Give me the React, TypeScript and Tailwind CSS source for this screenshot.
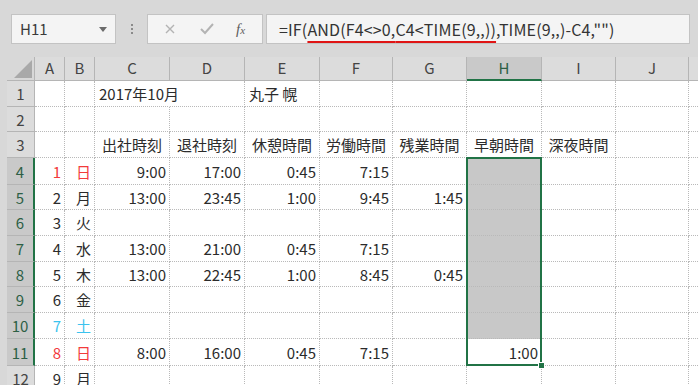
import React from 'react';

const FONT = { fontFamily: '"Noto Sans CJK JP", "Noto Sans", sans-serif' };

const COLS = ['A', 'B', 'C', 'D', 'E', 'F', 'G', 'H', 'I', 'J'];
const ROW_H = ['h-[26px]', 'h-[25px]', 'h-[26px]', 'h-[27px]', 'h-[25px]', 'h-[26px]', 'h-[26px]', 'h-[25px]', 'h-[26px]', 'h-[26px]', 'h-[27px]', 'h-[26px]'];

type Cell = { v: string; align?: 'l' | 'c' | 'r'; color?: string; spill?: boolean };
type Row = Record<string, Cell>;

const red = 'text-[#f23b3b]';
const blue = 'text-[#3cc3ee]';

const rows: Row[] = [
  { C: { v: '2017年10月', align: 'l', spill: true }, E: { v: '丸子 幌', align: 'l' } },
  {},
  {
    C: { v: '出社時刻', align: 'c' },
    D: { v: '退社時刻', align: 'c' },
    E: { v: '休憩時間', align: 'c' },
    F: { v: '労働時間', align: 'c' },
    G: { v: '残業時間', align: 'c' },
    H: { v: '早朝時間', align: 'c' },
    I: { v: '深夜時間', align: 'c' },
  },
  { A: { v: '1', color: red }, B: { v: '日', color: red }, C: { v: '9:00' }, D: { v: '17:00' }, E: { v: '0:45' }, F: { v: '7:15' } },
  { A: { v: '2' }, B: { v: '月' }, C: { v: '13:00' }, D: { v: '23:45' }, E: { v: '1:00' }, F: { v: '9:45' }, G: { v: '1:45' } },
  { A: { v: '3' }, B: { v: '火' } },
  { A: { v: '4' }, B: { v: '水' }, C: { v: '13:00' }, D: { v: '21:00' }, E: { v: '0:45' }, F: { v: '7:15' } },
  { A: { v: '5' }, B: { v: '木' }, C: { v: '13:00' }, D: { v: '22:45' }, E: { v: '1:00' }, F: { v: '8:45' }, G: { v: '0:45' } },
  { A: { v: '6' }, B: { v: '金' } },
  { A: { v: '7', color: blue }, B: { v: '土', color: blue } },
  { A: { v: '8', color: red }, B: { v: '日', color: red }, C: { v: '8:00' }, D: { v: '16:00' }, E: { v: '0:45' }, F: { v: '7:15' }, H: { v: '1:00' } },
  { A: { v: '9' }, B: { v: '月' } },
];

function Corner() {
  return (
    <div className="flex h-full items-end justify-end border-r border-b border-[#b5b5b5] pr-[2px] pb-[2px]">
      <svg width="18" height="18" viewBox="0 0 18 18">
        <polygon points="18,0 18,18 0,18" fill="#a9a9a9" />
      </svg>
    </div>
  );
}

function FormulaBar() {
  return (
    <div className="flex h-[57px] items-start gap-0 pt-[14px] pl-[11px]">
      <div className="flex h-[30px] w-[105px] items-center justify-between border border-[#c3c3c3] bg-[#f4f4f4] pl-[8px] pr-[8px] text-[15px] text-[#3a3a3a]">
        <span>H11</span>
        <svg width="8" height="5" viewBox="0 0 8 5">
          <polygon points="0,0 8,0 4,5" fill="#6b6b6b" />
        </svg>
      </div>
      <div className="flex h-[30px] w-[31px] flex-col items-center justify-center gap-[2px]">
        <span className="h-[2px] w-[2px] bg-[#8a8a8a]" />
        <span className="h-[2px] w-[2px] bg-[#8a8a8a]" />
        <span className="h-[2px] w-[2px] bg-[#8a8a8a]" />
      </div>
      <div className="flex h-[30px] w-[116px] items-center border border-[#c3c3c3] bg-[#f4f4f4] pl-[14px] text-[#b0b0b0]">
        <svg width="12" height="12" viewBox="0 0 12 12" className="ml-[2px]">
          <path d="M2 2 L10 10 M10 2 L2 10" stroke="#b3b3b3" strokeWidth="1.4" />
        </svg>
        <svg width="14" height="12" viewBox="0 0 14 12" className="ml-[24px]">
          <path d="M1 6 L5 10 L13 1" stroke="#b3b3b3" strokeWidth="2" fill="none" />
        </svg>
        <span className="ml-[22px] text-[15px] italic text-[#5d5d5d]" style={{ fontFamily: '"Liberation Serif", serif' }}>
          f<span className="text-[11px]">x</span>
        </span>
      </div>
      <div className="ml-[3px] flex h-[30px] w-[424px] items-center border border-[#c3c3c3] bg-[#f4f4f4] pl-[12px] text-[16px] tracking-[0.15px] text-[#333]">
        <span>=IF(</span>
        <span className="underline decoration-[#e01515] decoration-2 underline-offset-[5px]">AND(F4&lt;&gt;0,</span>
        <span className="underline decoration-[#e01515] decoration-2 underline-offset-[5px]">C4&lt;TIME(9,,))</span>
        <span>,TIME(9,,)-C4,"")</span>
      </div>
    </div>
  );
}

function Sheet() {
  return (
    <div className="grid grid-cols-[7px_28px_30px_30px_75px_75px_75px_73px_74px_75px_74px_73px_9px]">
      {/* column header row */}
      <div className="h-[24px]" />
      <Corner />
      {COLS.map((c) => (
        <div
          key={c}
          className={
            c === 'H'
              ? 'flex h-[24px] items-center justify-center border-r border-b-2 border-r-[#b5b5b5] border-b-[#217346] bg-[#c9c9c9] text-[15px] text-[#2d5f45]'
              : 'flex h-[24px] items-center justify-center border-r border-b border-[#b5b5b5] bg-[#dcdcdc] text-[15px] text-[#444]'
          }
        >
          {c}
        </div>
      ))}
      <div className="h-[24px] border-b border-[#b5b5b5] bg-[#dcdcdc]" />

      {rows.map((row, i) => {
        const n = i + 1;
        const sel = n >= 4 && n <= 11;
        const h = ROW_H[i];
        return (
          <React.Fragment key={n}>
            <div className={h} />
            <div
              className={
                sel
                  ? `${h} flex items-center justify-center border-r-2 border-b border-r-[#217346] border-b-[#b5b5b5] bg-[#c9c9c9] pt-[2px] text-[15px] text-[#2d5f45]`
                  : `${h} flex items-center justify-center border-r border-b border-[#b5b5b5] bg-[#dcdcdc] pt-[2px] text-[15px] text-[#444]`
              }
            >
              {n}
            </div>
            {COLS.map((c) => {
              const cell = row[c];
              const shaded = c === 'H' && n >= 4 && n <= 10;
              const align = cell?.align ?? 'r';
              return (
                <div
                  key={c}
                  className={[
                    h,
                    'relative flex items-center whitespace-nowrap border-r border-b border-dotted border-[#b9b9b9] pt-[2px] text-[15px]',
                    align === 'r' ? 'justify-end pr-[3px]' : align === 'c' ? 'justify-center' : 'justify-start pl-[4px]',
                    shaded ? 'bg-[#c8c8c8]' : 'bg-white',
                    cell?.spill ? 'z-[5] border-r-white' : '',
                    cell?.color ?? 'text-[#2b2b2b]',
                  ].join(' ')}
                >
                  {cell?.v}
                  {c === 'H' && n === 4 && (
                    <div className="pointer-events-none absolute top-[-1px] left-[-1px] z-10 h-[209px] w-[76px] border-2 border-[#217346]">
                      <div className="absolute right-[-5px] bottom-[-5px] h-[7px] w-[7px] border border-white bg-[#217346]" />
                    </div>
                  )}
                </div>
              );
            })}
            <div className={`${h} border-b border-dotted border-[#b9b9b9] bg-white`} />
          </React.Fragment>
        );
      })}
    </div>
  );
}

export default function App() {
  return (
    <div className="h-[385px] w-[698px] overflow-hidden bg-[#d8d8d8]" style={FONT}>
      <FormulaBar />
      <Sheet />
    </div>
  );
}
